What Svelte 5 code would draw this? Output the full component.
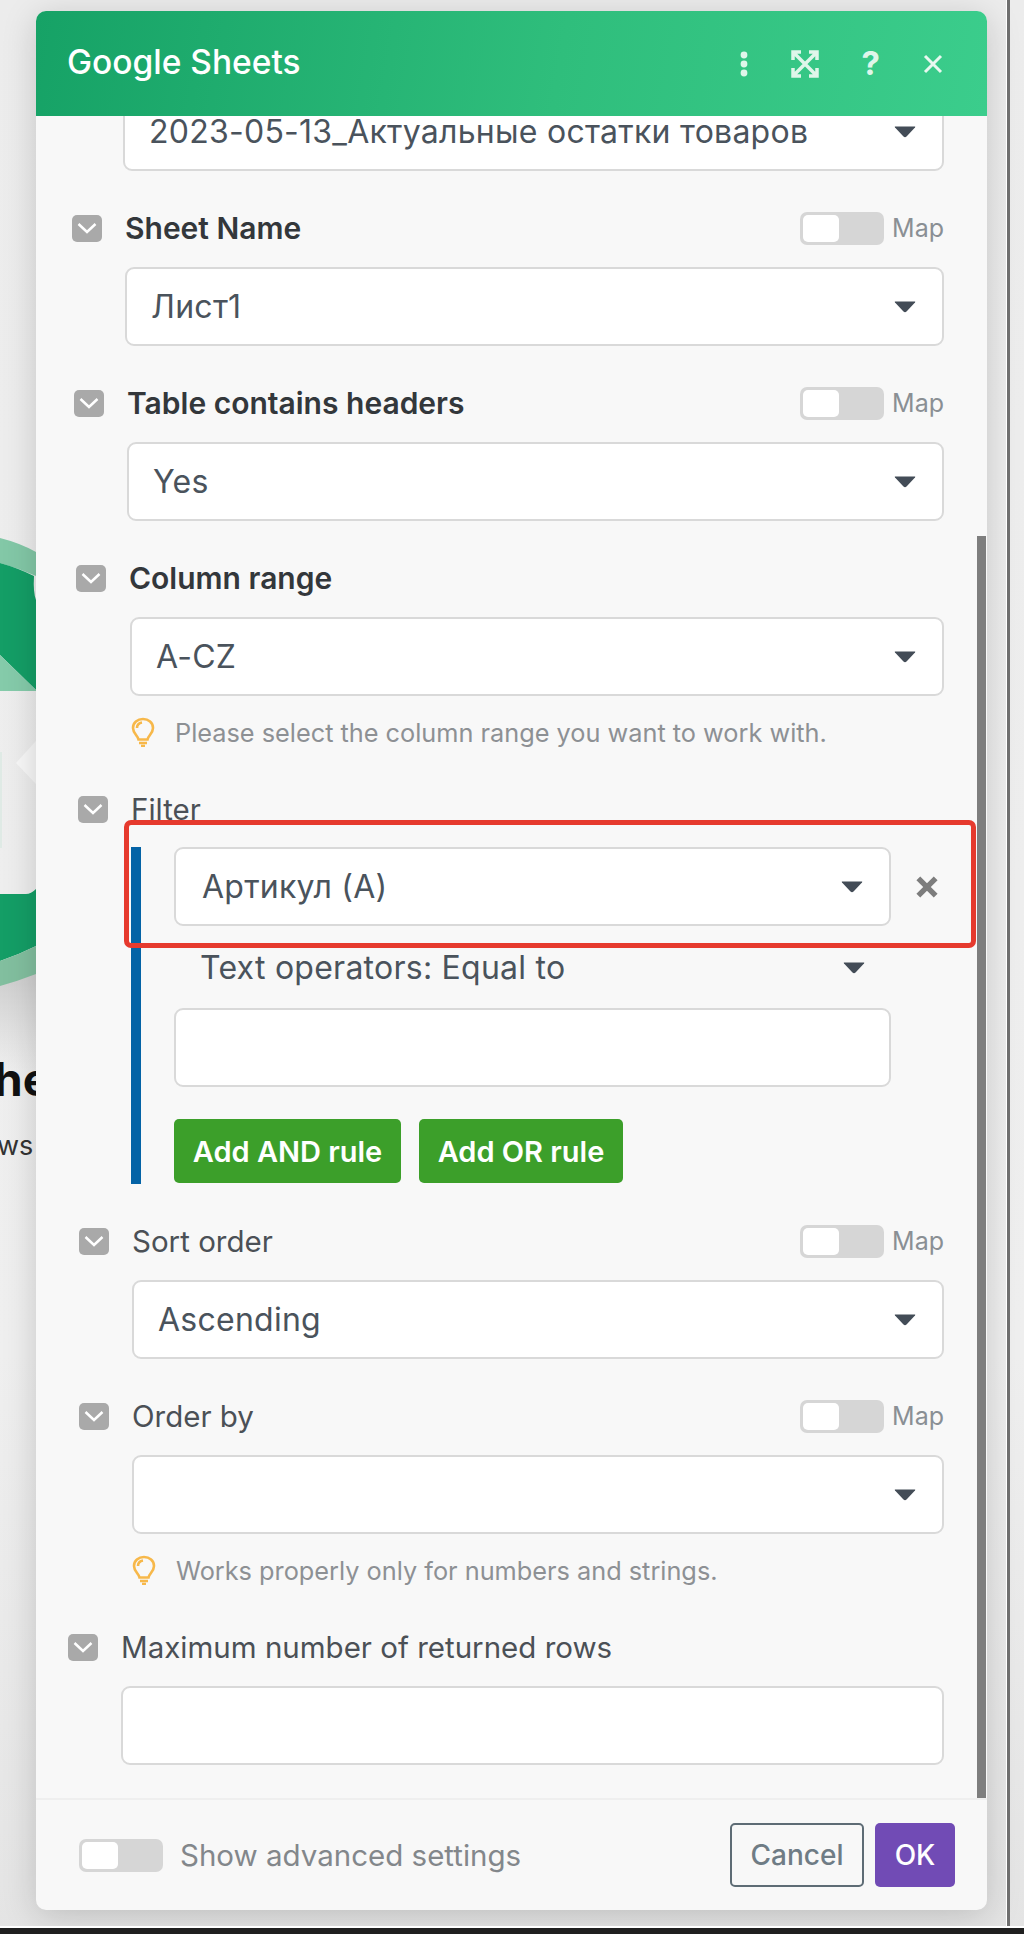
<script>
  const chevron = 'M1.500 6 L10 14 L18.500 6';
  const blocks = [
    { label: 'Sheet Name', bold: true, map: true, value: 'Лист1', indent: 125, check: 72 },
    { label: 'Table contains headers', bold: true, map: true, value: 'Yes', indent: 127, check: 74 },
    { label: 'Column range', bold: true, map: false, value: 'A-CZ', indent: 130, check: 76, hint: 'Please select the column range you want to work with.', hintX: 131 }
  ];
  const lower = [
    { label: 'Sort order', value: 'Ascending', indent: 132, check: 79 },
    { label: 'Order by', value: '', indent: 132, check: 79, hint: 'Works properly only for numbers and strings.', hintX: 132 }
  ];
</script>

{#snippet arrow()}
  <svg class="arrow" viewBox="0 0 22 13" aria-hidden="true"><path d="M1 1.500 H21 Q21.500 1.500 21 2.500 L12.500 11.500 Q11 12.800 9.500 11.500 L1 2.500 Q0.500 1.500 1 1.500Z" /></svg>
{/snippet}

{#snippet check(x)}
  <span class="check" style="margin-left: {x - 36}px">
    <svg viewBox="0 0 20 20" width="20" height="20" aria-hidden="true"><path d={chevron} /></svg>
  </span>
{/snippet}

{#snippet toggle()}
  <span class="toggle"><span class="knob"></span></span>
{/snippet}

{#snippet bulb(x)}
  <p class="hint-icon" style="margin-left: {x - 36}px">
    <svg viewBox="0 0 24 30" width="24" height="30" aria-hidden="true">
      <path d="M7.500 22.500 C6.800 18.500 2 16.500 2 11 C2 5.500 6.500 2 12 2 C17.500 2 22 5.500 22 11 C22 16.500 17.200 18.500 16.500 22.500 Z" />
      <path d="M8 26 H16 M10 29 H14" />
      <path d="M6 11 C6 8 8 6 11 5.500" />
    </svg>
  </p>
{/snippet}

<div class="screen">
  <svg class="backdrop" viewBox="0 0 40 560" width="40" height="560" aria-hidden="true">
    <defs>
      <linearGradient id="fade" x1="0" y1="0" x2="0" y2="1">
        <stop offset="0" stop-color="#cdcdcd" />
        <stop offset="1" stop-color="#cdcdcd" stop-opacity="0" />
      </linearGradient>
    </defs>
    <rect x="0" y="440" width="40" height="100" fill="url(#fade)" />
    <path d="M0 8 Q20 13 36 22 V46 Q18 38 0 33 Z" fill="#83c8a7" />
    <path d="M0 33 Q18 38 34 46 Q33 62 36 70 V160 L0 125 Z" fill="#149e66" />
    <path d="M0 125 L36 160 V161 H0 Z" fill="#85cbaa" />
    <rect x="0" y="222" width="2" height="96" fill="#dfeae5" />
    <path d="M0 364 H26 Q31 364 36 359 V416 Q18 425 0 431 Z" fill="#149e66" />
    <path d="M0 431 Q18 425 36 416 V444 Q18 451 0 456 Z" fill="#82bf9f" />
    <path d="M36 211 L16 233 L36 254 Z" fill="#f8f8f8" />
  </svg>
  <div class="behind behind-title">he</div>
  <div class="behind behind-sub">ws</div>

  <div class="panel">
    <header class="head">
      <h1>Google Sheets</h1>
      <div class="tools">
        <svg viewBox="0 0 10 26" width="10" height="26" aria-hidden="true"><circle cx="5" cy="4" r="3.400" /><circle cx="5" cy="13" r="3.400" /><circle cx="5" cy="22" r="3.400" /></svg>
        <svg class="expand" viewBox="0 0 28 28" width="28" height="28" aria-hidden="true">
          <path d="M2 10 V2 H10 M18 2 H26 V10 M26 18 V26 H18 M10 26 H2 V18 M3 3 L25 25 M25 3 L3 25" />
        </svg>
        <span class="q">?</span>
        <svg class="close" viewBox="0 0 20 20" width="20" height="20" aria-hidden="true"><path d="M2 2 L18 18 M18 2 L2 18" /></svg>
      </div>
    </header>

    <div class="body">
      <div class="select first">
        <span>2023-05-13_Актуальные остатки товаров</span>
        {@render arrow()}
      </div>

      {#each blocks as b}
        <div class="label-row">
          {@render check(b.check)}
          <span class="label" class:bold={b.bold}>{b.label}</span>
          {#if b.map}
            <div class="map">{@render toggle()}<span>Map</span></div>
          {/if}
        </div>
        <div class="select" style="margin-left: {b.indent - 36}px">
          <span>{b.value}</span>
          {@render arrow()}
        </div>
        {#if b.hint}
          <div class="hint">
            {@render bulb(b.hintX)}
            <span>{b.hint}</span>
          </div>
        {/if}
      {/each}

      <div class="label-row filter-row">
        {@render check(78)}
        <span class="label">Filter</span>
      </div>

      <div class="filter">
        <div class="rule">
          <div class="select plain-row">
            <span>Артикул (А)</span>
            {@render arrow()}
          </div>
          <svg class="remove" viewBox="0 0 24 24" width="26" height="26" aria-hidden="true"><path d="M4 4 L20 20 M20 4 L4 20" /></svg>
        </div>
        <div class="operator">
          <span>Text operators: Equal to</span>
          {@render arrow()}
        </div>
        <div class="select blank"></div>
        <div class="buttons">
          <button class="add and">Add AND rule</button>
          <button class="add or">Add OR rule</button>
        </div>
      </div>

      {#each lower as b, i}
        <div class="label-row" class:sort={i === 0}>
          {@render check(b.check)}
          <span class="label">{b.label}</span>
          <div class="map">{@render toggle()}<span>Map</span></div>
        </div>
        <div class="select" style="margin-left: {b.indent - 36}px">
          <span>{b.value}</span>
          {@render arrow()}
        </div>
        {#if b.hint}
          <div class="hint">
            {@render bulb(b.hintX)}
            <span>{b.hint}</span>
          </div>
        {/if}
      {/each}

      <div class="label-row max">
        {@render check(68)}
        <span class="label">Maximum number of returned rows</span>
      </div>
      <div class="select blank wide"></div>

      <div class="scrollbar"></div>
    </div>

    <footer class="foot">
      <div class="advanced">{@render toggle()}<span>Show advanced settings</span></div>
      <div class="actions">
        <button class="cancel">Cancel</button>
        <button class="ok">OK</button>
      </div>
    </footer>
  </div>

  <div class="edge"></div>
  <div class="taskbar"></div>

  <div class="highlight"></div>
</div>

<style>
  :global(body) {
    margin: 0;
  }

  .screen {
    position: relative;
    width: 1024px;
    height: 1934px;
    overflow: hidden;
    font-family: Inter, "Noto Sans", sans-serif;
    background: linear-gradient(180deg, #ececec 0%, #efefef 70%, #e4e4e4 100%);
  }

  .backdrop {
    position: absolute;
    left: 0;
    top: 530px;
  }

  .behind {
    position: absolute;
    color: #111;
    white-space: nowrap;
  }

  .behind-title {
    top: 1051px;
    left: -6px;
    font-size: 46px;
    font-weight: 700;
  }

  .behind-sub {
    top: 1129px;
    left: -3px;
    font-size: 27px;
    color: #333;
  }

  .panel {
    position: absolute;
    left: 36px;
    top: 11px;
    width: 951px;
    height: 1899px;
    display: flex;
    flex-direction: column;
    background: #f8f8f8;
    border-radius: 10px;
    box-shadow: 0 6px 34px rgba(0, 0, 0, 0.17);
  }

  .head {
    position: relative;
    z-index: 2;
    flex: 0 0 105px;
    display: flex;
    align-items: center;
    justify-content: space-between;
    padding: 0 44px 0 31px;
    background: linear-gradient(100deg, #16a266 0%, #2fbe7c 55%, #3bcd8c 100%);
    border-radius: 10px 10px 0 0;
    color: #fff;
  }

  .head h1 {
    margin: -3px 0 0;
    font-size: 33.500px;
    font-weight: 500;
  }

  .tools {
    display: flex;
    align-items: center;
    color: #dff6ea;
  }

  .tools svg {
    fill: #dff6ea;
    display: block;
  }

  .tools .expand {
    margin-left: 42px;
    fill: none;
    stroke: #dff6ea;
    stroke-width: 3.500;
  }

  .tools .q {
    margin-left: 43px;
    font-size: 33px;
    font-weight: 700;
    line-height: 1;
  }

  .tools .close {
    margin-left: 43px;
    fill: none;
    stroke: #e8f8f0;
    stroke-width: 3;
  }

  .body {
    position: relative;
    flex: 1;
    display: flex;
    flex-direction: column;
    min-height: 0;
    padding-right: 43px;
    border-bottom: 2px solid #efefef;
  }

  .select {
    display: flex;
    align-items: center;
    justify-content: space-between;
    box-sizing: border-box;
    height: 79px;
    padding: 0 26px 0 24px;
    background: #fff;
    border: 2px solid #d9d9d9;
    border-radius: 9px;
    color: #4a535c;
    font-size: 32px;
    letter-spacing: 0.25px;
  }

  .select.first {
    margin: -24px 0 0 87px;
  }

  .arrow {
    width: 22px;
    height: 13px;
    fill: #434c57;
    flex: none;
  }

  .label-row {
    position: relative;
    display: flex;
    align-items: center;
    height: 36px;
    margin-top: 39px;
    margin-bottom: 21px;
    font-size: 29.500px;
  }

  .check {
    flex: none;
    display: flex;
    align-items: center;
    justify-content: center;
    width: 30px;
    height: 27px;
    background: #a9a9a9;
    border-radius: 5px;
    margin-right: 23px;
  }

  .check svg {
    fill: none;
    stroke: #fff;
    stroke-width: 2.500;
  }

  .label {
    white-space: nowrap;
    color: #4b5056;
  }

  .label.bold {
    font-size: 30px;
    font-weight: 600;
    color: #33373b;
  }

  .map {
    display: flex;
    align-items: center;
    gap: 8px;
    margin-left: auto;
    color: #8a8f94;
    font-size: 25px;
  }

  .toggle {
    display: flex;
    align-items: center;
    box-sizing: border-box;
    width: 84px;
    height: 33px;
    padding: 3px;
    background: #d6d6d6;
    border-radius: 7px;
  }

  .knob {
    width: 36px;
    height: 27px;
    background: #fff;
    border-radius: 5px;
  }

  .hint {
    display: flex;
    align-items: center;
    height: 36px;
    margin-top: 18px;
    margin-bottom: -1px;
    color: #8d9094;
    font-size: 25.300px;
  }

  .hint-icon {
    margin: 0 20px 0 0;
    height: 30px;
  }

  .hint-icon svg {
    display: block;
    fill: none;
    stroke: #f7b84a;
    stroke-width: 2.600;
  }

  .label-row.filter-row {
    margin-top: 43px;
    margin-bottom: 0;
    height: 34px;
  }

  .filter {
    display: flex;
    flex-direction: column;
    box-sizing: border-box;
    margin: 21px 0 0 95px;
    height: 337px;
    padding-left: 33px;
    border-left: 10px solid #0463a6;
  }

  .rule {
    display: flex;
    align-items: center;
  }

  .rule .plain-row {
    width: 717px;
    flex: none;
    padding-left: 26px;
  }

  .remove {
    margin-left: 23px;
    fill: none;
    stroke: #7d7d7d;
    stroke-width: 5;
  }

  .operator {
    display: flex;
    align-items: center;
    justify-content: space-between;
    height: 82px;
    box-sizing: border-box;
    width: 717px;
    padding: 0 26px;
    color: #4a535c;
    font-size: 32px;
    letter-spacing: 0.25px;
  }

  .filter .blank {
    width: 717px;
    flex: none;
  }

  .buttons {
    display: flex;
    gap: 18px;
    margin-top: 32px;
  }

  .add {
    height: 64px;
    border: 0;
    border-radius: 5px;
    background: #3c9f2a;
    color: #fff;
    font: 600 29px Inter, "Noto Sans", sans-serif;
    padding: 0;
  }

  .add.and {
    width: 227px;
  }

  .add.or {
    width: 204px;
  }

  .label-row.sort {
    margin-top: 39px;
  }

  .label-row.max {
    margin-top: 42px;
  }

  .select.wide {
    margin-left: 85px;
  }

  .scrollbar {
    position: absolute;
    right: 1px;
    top: 420px;
    width: 9px;
    height: 1262px;
    background: #7e7e7e;
  }

  .foot {
    flex: 0 0 110px;
    display: flex;
    align-items: center;
    justify-content: space-between;
    padding: 0 32px 0 43px;
  }

  .advanced {
    display: flex;
    align-items: center;
    gap: 17px;
    color: #83878b;
    font-size: 29.500px;
  }

  .actions {
    display: flex;
    gap: 11px;
  }

  .actions button {
    height: 64px;
    border-radius: 5px;
    font: 500 28px Inter, "Noto Sans", sans-serif;
    padding: 0;
  }

  .cancel {
    width: 134px;
    background: #f8f8f8;
    border: 2px solid #5e6c75;
    color: #6f7c85;
  }

  .ok {
    width: 80px;
    background: #714bb5;
    border: 0;
    color: #fff;
  }

  .edge {
    position: absolute;
    left: 1007px;
    top: 0;
    bottom: 0;
    width: 3px;
    background: #6f6f6f;
    box-shadow: -1px 0 0 #fff;
  }

  .taskbar {
    position: absolute;
    left: 0;
    right: 0;
    bottom: 0;
    height: 6px;
    background: #1f1f1f;
    box-shadow: 0 -2px 0 #fff;
  }

  .highlight {
    position: absolute;
    left: 124px;
    top: 820px;
    width: 852px;
    height: 128px;
    box-sizing: border-box;
    border: 5px solid #e63a2e;
    border-radius: 7px;
    pointer-events: none;
  }
</style>
